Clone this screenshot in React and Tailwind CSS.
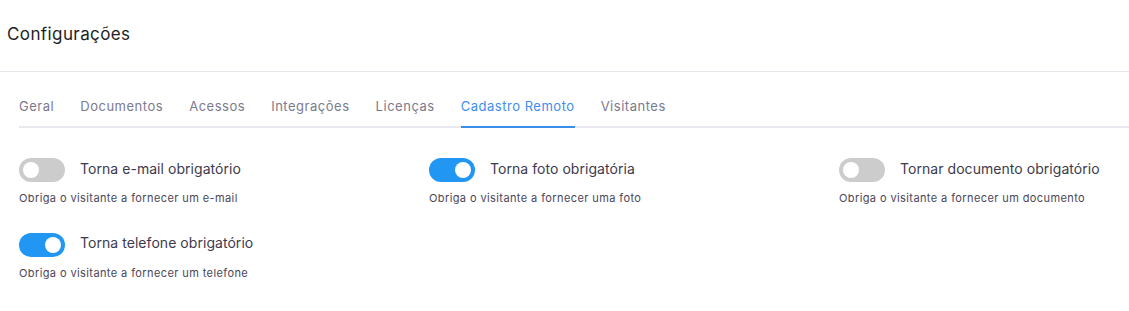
import React from "react";

const tabs = ["Geral", "Documentos", "Acessos", "Integrações", "Licenças", "Cadastro Remoto", "Visitantes"];

function Toggle({ on }) {
  return (
    <div className={`w-[46px] h-[24px] rounded-full flex items-center px-[4px] shrink-0 ${on ? "bg-[#2196f3] justify-end" : "bg-[#cccccc] justify-start"}`}>
      <div className="w-[16px] h-[16px] rounded-full bg-white" />
    </div>
  );
}

function Setting({ on, title, desc }) {
  return (
    <div className="flex flex-col">
      <div className="flex items-center gap-[15px] h-[24px]">
        <Toggle on={on} />
        <span className="text-[14px] tracking-[0.05px] text-[#3d3a4e] -mt-[4px]">{title}</span>
      </div>
      <div className="text-[11px] tracking-[0.4px] text-[#4a4658] mt-[8px]">{desc}</div>
    </div>
  );
}

export default function App() {
  return (
    <div className="w-[1129px] h-[311px] bg-white overflow-hidden" style={{ fontFamily: "Inter, 'Open Sans', sans-serif" }}>
      <div className="h-[72px] border-b border-[#e6e6ec] flex items-center px-[7px]">
        <h1 className="text-[17px] tracking-[0.4px] text-[#1e1e24] -mt-[1px]">Configurações</h1>
      </div>
      <div className="pl-[19px]">
        <div className="flex gap-[26px] border-b-2 border-[#e8e8ee] h-[56px] items-end">
          {tabs.map((t) => {
            const active = t === "Cadastro Remoto";
            return (
              <div
                key={t}
                className={`text-[13px] tracking-[0.52px] pb-[10px] -mb-[2px] border-b-2 ${active ? "text-[#3d8ef0] border-[#3a8ee6]" : "text-[#7b7a8e] border-transparent"}`}
              >
                {t}
              </div>
            );
          })}
        </div>
        <div className="grid grid-cols-[410px_410px_410px] gap-y-[26px] pt-[30px]">
          <Setting on={false} title="Torna e-mail obrigatório" desc="Obriga o visitante a fornecer um e-mail" />
          <Setting on={true} title="Torna foto obrigatória" desc="Obriga o visitante a fornecer uma foto" />
          <Setting on={false} title="Tornar documento obrigatório" desc="Obriga o visitante a fornecer um documento" />
          <Setting on={true} title="Torna telefone obrigatório" desc="Obriga o visitante a fornecer um telefone" />
        </div>
      </div>
    </div>
  );
}
